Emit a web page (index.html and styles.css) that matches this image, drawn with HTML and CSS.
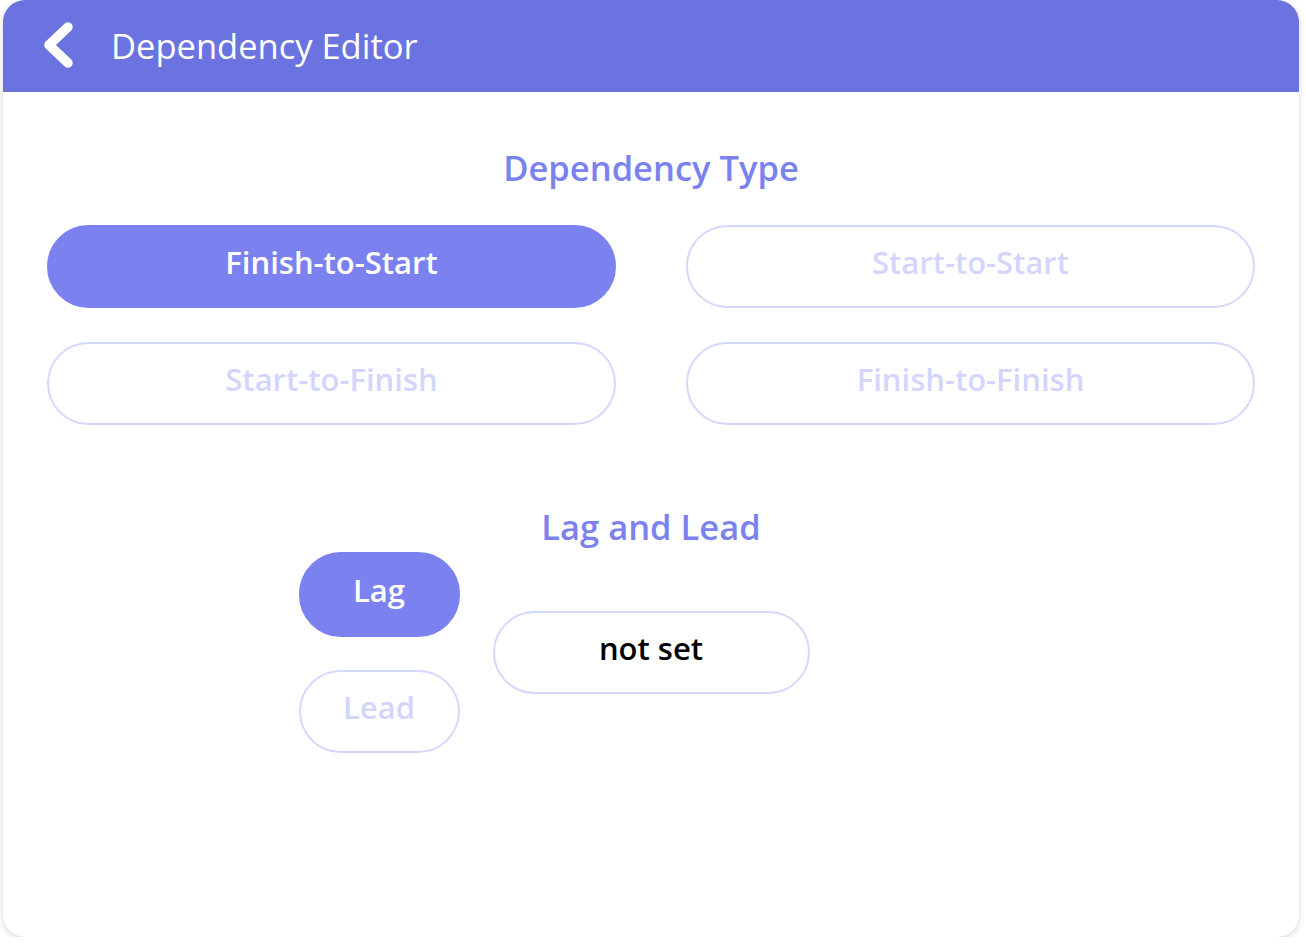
FILE: index.html
```html
<!DOCTYPE html>
<html>
<head>
<meta charset="utf-8">
<link rel="stylesheet" href="styles.css">
</head>
<body>
<div class="card">
  <header class="header">
    <svg class="back" width="36" height="50" viewBox="0 0 36 50">
      <path d="M28 7 L9 25 L28 43" fill="none" stroke="#fff" stroke-width="9.5" stroke-linecap="round" stroke-linejoin="round"/>
    </svg>
    <h1 class="title">Dependency Editor</h1>
  </header>
  <main class="content">
    <h2 class="section-title">Dependency Type</h2>
    <div class="type-grid">
      <button class="pill active">Finish-to-Start</button>
      <button class="pill">Start-to-Start</button>
      <button class="pill">Start-to-Finish</button>
      <button class="pill">Finish-to-Finish</button>
    </div>
    <h2 class="section-title lag-title">Lag and Lead</h2>
    <div class="lag-grid">
      <div class="lag-col">
        <button class="pill small active">Lag</button>
        <button class="pill small">Lead</button>
      </div>
      <div class="value-box">not set</div>
      <div></div>
    </div>
  </main>
</div>
</body>
</html>
```

FILE: styles.css
```css
html, body {
  margin: 0;
  padding: 0;
  background: #ffffff;
  font-family: "Open Sans", "Noto Sans", sans-serif;
}

.card {
  margin-left: 3px;
  width: 1296px;
  height: 937px;
  background: #ffffff;
  border-radius: 22px;
  box-shadow: 0 2px 6px rgba(0, 0, 0, 0.16);
  overflow: hidden;
}

.header {
  height: 92px;
  background: #6b73e0;
  display: flex;
  align-items: center;
  box-sizing: border-box;
  padding-left: 37px;
  padding-bottom: 2px;
}

.back {
  display: block;
}

.title {
  margin: 0 0 0 35px;
  color: #ffffff;
  font-weight: 400;
  font-size: 34.5px;
  letter-spacing: 0;
}

.content {
  padding: 0 44px;
  display: flex;
  flex-direction: column;
  align-items: center;
}

.section-title {
  margin: 0;
  color: #7b82ee;
  font-weight: 600;
  font-size: 34.5px;
  line-height: 44px;
  margin-top: 54px;
}

.type-grid {
  align-self: stretch;
  margin-top: 35px;
  display: grid;
  grid-template-columns: 1fr 1fr;
  column-gap: 70px;
  row-gap: 34px;
}

.pill {
  height: 83px;
  border-radius: 42px;
  border: 2.5px solid #d5d8fd;
  background: #ffffff;
  color: #d3d6fc;
  font-family: inherit;
  font-weight: 600;
  font-size: 31px;
  padding: 0 0 10px 0;
  display: flex;
  align-items: center;
  justify-content: center;
  box-sizing: border-box;
}

.pill.active {
  background: #7b82ef;
  border-color: #7b82ef;
  color: #ffffff;
}

.lag-title {
  margin-top: 80px;
}

.lag-grid {
  display: grid;
  grid-template-columns: 161px 317px 161px;
  column-gap: 33px;
  align-items: center;
  margin-top: 3px;
}

.lag-col {
  display: flex;
  flex-direction: column;
  gap: 33px;
}

.pill.small {
  height: 85px;
  width: 161px;
}

.pill.small + .pill.small {
  height: 83px;
}

.value-box {
  height: 83px;
  border-radius: 42px;
  border: 2.5px solid #d5d8fd;
  box-sizing: border-box;
  display: flex;
  align-items: center;
  justify-content: center;
  padding-bottom: 10px;
  color: #000000;
  font-weight: 600;
  font-size: 31px;
}
```
